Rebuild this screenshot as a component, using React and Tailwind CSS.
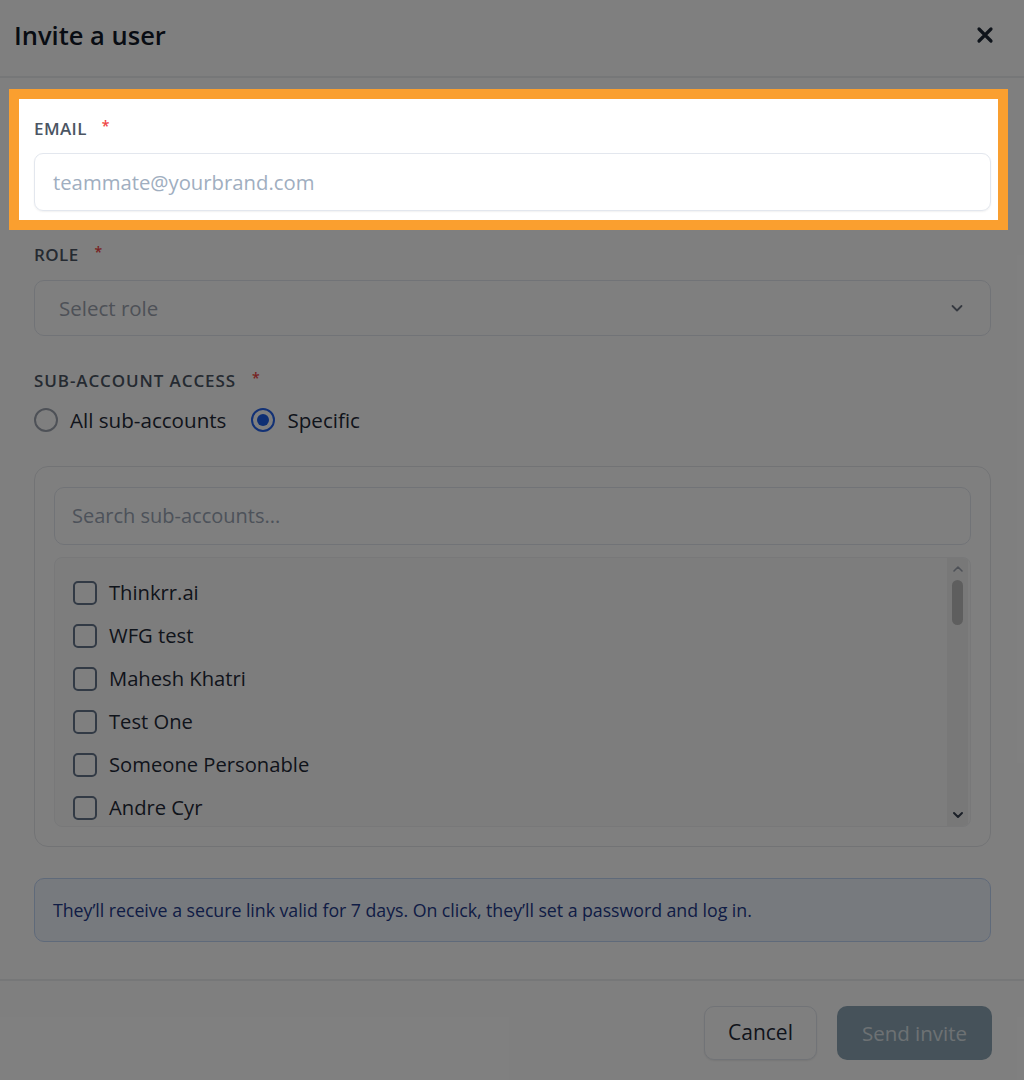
import React from "react";

function Asterisk() {
  return <span className="text-[#ef4444] text-[14px] leading-none -mt-[6px]">*</span>;
}

function Label({ children, gap = "gap-[15px]", extra = "" }) {
  return (
    <div className={`h-[20px] flex items-center ${gap} text-[17px] font-semibold tracking-[0.4px] text-[#4b5563] ${extra}`}>
      <span>{children}</span>
      <Asterisk />
    </div>
  );
}

export default function App() {
  const items = [
    "Thinkrr.ai",
    "WFG test",
    "Mahesh Khatri",
    "Test One",
    "Someone Personable",
    "Andre Cyr",
  ];
  return (
    <div className="relative w-[1024px] h-[1080px] bg-white overflow-hidden flex flex-col font-['Open_Sans','Noto_Sans',sans-serif]">
      {/* Header */}
      <div className="h-[78px] shrink-0 flex items-center justify-between pl-[14px] pr-[30px] pb-[6px] border-b-2 border-[#eceef1]">
        <h2 className="text-[25.5px] font-semibold text-[#111827]">Invite a user</h2>
        <svg width="18" height="18" viewBox="0 0 18 18" fill="none" stroke="#1f2937" strokeWidth="3.2" strokeLinecap="round">
          <path d="M3 3 L15 15 M15 3 L3 15" />
        </svg>
      </div>

      {/* Body */}
      <div className="flex-1 pl-[34px] pr-[33px] pt-[41px]">
        {/* Email (highlighted) */}
        <div className="relative">
          <div className="absolute -top-[30px] -bottom-[19px] -left-[25px] -right-[17px] z-20 bg-white border-[10px] border-[#fa9f2f]" />
          <div className="relative z-30">
            <Label gap="gap-[15px]">EMAIL</Label>
            <div className="mt-[14px] h-[58px] rounded-[9px] border border-[#e3e7ee] shadow-[0_1px_2px_rgba(0,0,0,0.06)] flex items-center px-[18px] text-[20.3px] text-[#a0aec0]">
              teammate@yourbrand.com
            </div>
          </div>
        </div>

        {/* Role */}
        <div className="mt-[34px]">
          <Label gap="gap-[16px]">ROLE</Label>
          <div className="mt-[15px] h-[56px] rounded-[10px] border border-[#e3e7ee] flex items-center justify-between pl-[24px] pr-[25px] text-[20.5px] text-[#9ca3af]">
            <span>Select role</span>
            <svg width="16" height="16" viewBox="0 0 16 16" fill="none" stroke="#6b7280" strokeWidth="1.8" strokeLinecap="round" strokeLinejoin="round">
              <path d="M3.5 6 L8 10.5 L12.5 6" />
            </svg>
          </div>
        </div>

        {/* Sub-account access */}
        <div className="mt-[35px]">
          <Label gap="gap-[16px]" extra="tracking-[0.9px]">SUB-ACCOUNT ACCESS</Label>
          <div className="mt-[17px] h-[24px] flex items-center text-[20.6px] text-[#1f2937]">
            <div className="w-[24px] h-[24px] rounded-full border-2 border-[#9ca3af] bg-white" />
            <span className="ml-[12px]">All sub-accounts</span>
            <div className="ml-[25px] w-[24px] h-[24px] rounded-full border-2 border-[#2563eb] bg-white flex items-center justify-center">
              <div className="w-[12px] h-[12px] rounded-full bg-[#1d5fe8]" />
            </div>
            <span className="ml-[12px]">Specific</span>
          </div>

          <div className="mt-[34px] h-[381px] rounded-[14px] border border-[#e5e7eb] px-[19px] pt-[20px] pb-[19px] flex flex-col">
            <div className="h-[58px] shrink-0 rounded-[10px] border border-[#e3e7ee] flex items-center px-[17px] text-[20px] text-[#9aa5b4]">
              Search sub-accounts...
            </div>
            <div className="mt-[12px] flex-1 min-h-0 rounded-[8px] border border-[#f0f1f3] bg-[#fbfbfb] flex overflow-hidden">
              <div className="flex-1 pl-[18px] pt-[13px] overflow-hidden">
                {items.map((name) => (
                  <div key={name} className="h-[43px] flex items-center">
                    <div className="w-[24px] h-[24px] rounded-[5px] border-2 border-[#64748b] bg-white" />
                    <span className="ml-[12px] text-[20.2px] text-[#1f2937]">{name}</span>
                  </div>
                ))}
              </div>
              <div className="w-[21px] mr-[2px] bg-[#f1f1f1] flex flex-col items-center pt-[6px] pb-[6px]">
                <svg width="12" height="10" viewBox="0 0 12 10" fill="none" stroke="#9ca3af" strokeWidth="1.6" strokeLinecap="round" strokeLinejoin="round">
                  <path d="M2 7 L6 3 L10 7" />
                </svg>
                <div className="mt-[6px] w-[11px] h-[45px] rounded-full bg-[#bdbdbd]" />
                <div className="flex-1" />
                <svg width="12" height="10" viewBox="0 0 12 10" fill="none" stroke="#374151" strokeWidth="2" strokeLinecap="round" strokeLinejoin="round">
                  <path d="M2 3 L6 7 L10 3" />
                </svg>
              </div>
            </div>
          </div>
        </div>

        {/* Info */}
        <div className="mt-[31px] h-[64px] rounded-[10px] border border-[#bfd4f5] bg-[#eef4fd] flex items-center px-[18px] text-[17.8px] tracking-[-0.05px] text-[#1e3a8a]">
          They’ll receive a secure link valid for 7 days. On click, they’ll set a password and log in.
        </div>
      </div>

      {/* Footer */}
      <div className="h-[101px] shrink-0 border-t-2 border-[#eceef1] flex justify-end items-start gap-[20px] pt-[25px] pr-[32px]">
        <button className="w-[113px] h-[54px] rounded-[10px] border border-[#e3e7ee] bg-white shadow-[0_1px_2px_rgba(0,0,0,0.08)] text-[21px] text-[#1f2937]">
          Cancel
        </button>
        <button className="w-[155px] h-[54px] rounded-[10px] bg-[#8ca5b5] text-[20.5px] text-white/70">
          Send invite
        </button>
      </div>

      {/* Dim overlay */}
      <div className="absolute inset-0 z-10 bg-black/50" />
    </div>
  );
}
